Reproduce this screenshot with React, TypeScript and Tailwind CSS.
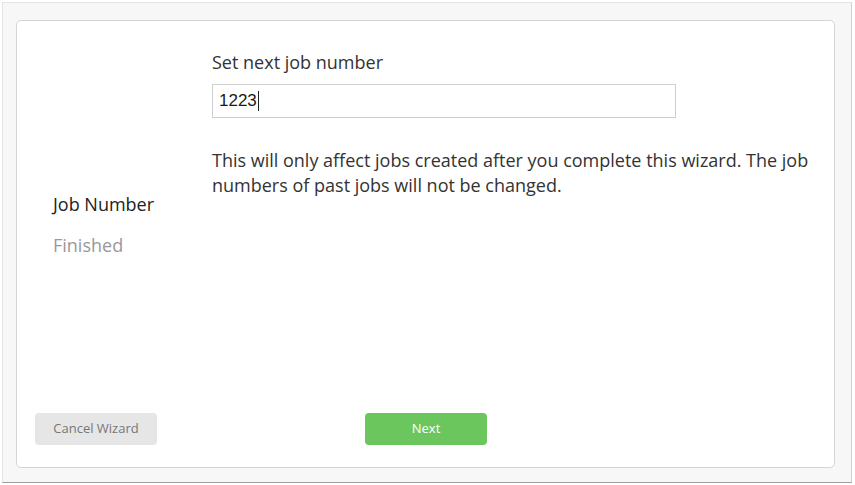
const sans = "font-['Open_Sans',_'Liberation_Sans',_sans-serif]";

function StepList() {
  return (
    <div className="w-[195px] shrink-0 pl-[36px] pt-[171px]">
      <div className="text-[18px] leading-6 text-[#222]">Job Number</div>
      <div className="mt-[17px] text-[18px] leading-6 text-[#999]">Finished</div>
    </div>
  );
}

function JobNumberStep() {
  return (
    <div className="flex-1 pr-[20px] pt-[29px]">
      <label className="block text-[18px] leading-6 text-[#333]">Set next job number</label>
      <div className="mt-[10px] flex h-[34px] w-[464px] items-center border border-[#cfcfcf] bg-white px-[6px] font-['Liberation_Sans',_Arial,_sans-serif] text-[17px] text-[#1a1a1a]">
        1223
        <span className="ml-px h-[20px] w-px bg-[#222]" />
      </div>
      <p className="mt-[30px] text-[18px] leading-[25px] text-[#333]">
        This will only affect jobs created after you complete this wizard. The job numbers of past
        jobs will not be changed.
      </p>
    </div>
  );
}

export default function App() {
  return (
    <div className={`h-[485px] w-[855px] bg-white pl-[2px] pt-[2px] ${sans}`}>
      <div className="h-[481px] w-[850px] border border-[#e4e4e4] border-r-[#cfcfcf] border-b-[#9d9d9d] bg-[#f7f7f7] pl-[13px] pt-[17px]">
        <div className="flex h-[448px] w-[819px] flex-col justify-between rounded-[5px] border border-[#d5d5d5] bg-white">
          <div className="flex">
            <StepList />
            <JobNumberStep />
          </div>
          <div className="flex pb-[22px] pl-[18px]">
            <button className="h-[32px] w-[122px] rounded-[4px] bg-[#e6e6e6] text-[13px] text-[#777]">
              Cancel Wizard
            </button>
            <button className="ml-[208px] h-[32px] w-[122px] rounded-[4px] bg-[#6cc65e] text-[13px] text-white">
              Next
            </button>
          </div>
        </div>
      </div>
    </div>
  );
}
